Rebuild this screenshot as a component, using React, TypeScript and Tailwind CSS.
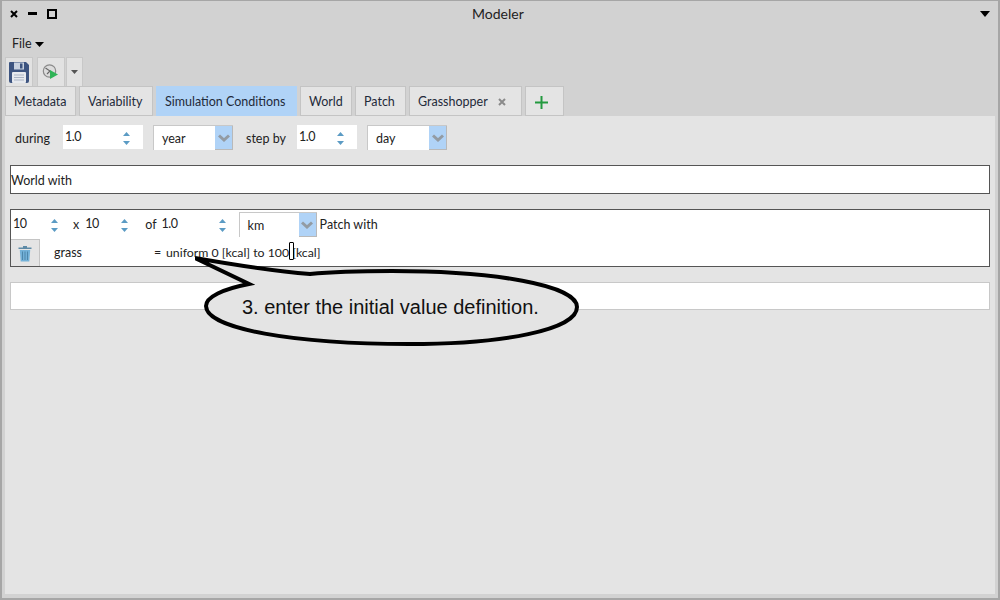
import React from 'react';

const Spinner = () => (
    <svg width="9" height="15" viewBox="0 0 9 15" className="shrink-0">
        <path d="M4.5 1 L8 5 H1 Z" fill="#5b9bc4" />
        <path d="M4.5 14 L8 10 H1 Z" fill="#5b9bc4" />
    </svg>
);

const NumberField = ({ value, w, pad = 'pr-[12px]' }: { value: string; w: string; pad?: string }) => (
    <div className={`${w} ${pad} bg-white h-[24px] flex items-center justify-between pl-[2px] pt-[2px]`}>
        <span className="relative top-[-1px] text-[12.5px] tracking-[-0.5px]">{value}</span>
        <Spinner />
    </div>
);

const Select = ({ value, w = 'w-[80px]' }: { value: string; w?: string }) => (
    <div className={`${w} h-[25px] flex bg-white border-t border-l border-[#c8c8c8]`}>
        <span className="flex-1 pl-[8px] leading-[26px]">{value}</span>
        <div className="w-[18px] bg-[#b0d3f7] border-r border-b border-[#b9b9b9] flex items-center justify-center">
            <svg width="12" height="8" viewBox="0 0 12 8">
                <path d="M1 1.5 L6 6 L11 1.5" fill="none" stroke="#939ba3" strokeWidth="3" />
            </svg>
        </div>
    </div>
);

const Tab = ({ label, w, active, children }: { label?: string; w: string; active?: boolean; children?: React.ReactNode }) => (
    <div className={`${w} h-[30px] flex items-center pl-[8px] pt-[2px] border-t border-x ${active ? 'bg-[#b0d3f7] border-[#b0d3f7]' : 'bg-[#e4e4e4] border-[#c4c4c4] border-b'}`}>
        {label}
        {children}
    </div>
);

export default function App() {
    return (
        <div className="w-[1000px] h-[600px] bg-[#d2d2d2] border-2 border-t-[1px] border-[#a6a6a6] flex flex-col text-[12.5px] text-[#222222] relative overflow-hidden" style={{ fontFamily: '"Lato", "Noto Sans", sans-serif' }}>
            {/* Title bar */}
            <div className="h-[27px] flex items-center justify-between pl-[8px] pr-[9px] pb-[2px] relative shrink-0">
                <div className="flex items-center gap-[10px]">
                    <svg width="8" height="8" viewBox="0 0 8 8"><path d="M1 1 L7 7 M7 1 L1 7" stroke="#000" strokeWidth="2" /></svg>
                    <div className="w-[9px] h-[3px] bg-black" />
                    <div className="w-[10px] h-[10px] border-2 border-black" />
                </div>
                <span className="absolute left-[470px] top-[2px] text-[14px]">Modeler</span>
                <svg width="10" height="6" viewBox="0 0 10 6" className="mr-[-1px]"><path d="M0 0 H10 L5 6 Z" fill="#000" /></svg>
            </div>

            {/* Menu */}
            <div className="h-[29px] flex items-center pl-[10px] gap-[3px] shrink-0 pt-[4px]">
                <span>File</span>
                <svg width="9" height="5" viewBox="0 0 9 5"><path d="M0 0 H9 L4.5 5 Z" fill="#000" /></svg>
            </div>

            {/* Toolbar */}
            <div className="h-[29px] flex pl-[3px] shrink-0">
                <div className="w-[28px] h-[29px] bg-[#e2e2e2] border-t border-x border-[#c8c8c8] flex items-center justify-center">
                    <svg width="22" height="23" viewBox="0 0 22 23">
                        <path d="M2 1 H18 L21 4 V20 Q21 22 19 22 H3 Q1 22 1 20 V2 Q1 1 2 1 Z" fill="#3d5480" />
                        <rect x="6" y="1.5" width="10" height="7" fill="#c9d2e0" />
                        <rect x="12" y="2.5" width="2.5" height="5" fill="#3d5480" />
                        <rect x="4" y="11" width="14" height="11" rx="1" fill="#e6e9ee" />
                        <path d="M6 14 H16 M6 16.5 H16 M6 19 H16" stroke="#a9b3c4" strokeWidth="1" />
                    </svg>
                </div>
                <div className="w-[28px] h-[29px] ml-[4px] bg-[#e2e2e2] border-t border-x border-[#c8c8c8] flex items-center justify-center">
                    <svg width="18" height="18" viewBox="0 0 18 18">
                        <circle cx="7.5" cy="8" r="6.2" fill="#dcdcdc" stroke="#8a8a8a" strokeWidth="1.2" />
                        <path d="M3.5 5 L8 8 L5 11" fill="none" stroke="#666" strokeWidth="1.1" />
                        <path d="M8 7 L16 11.5 L8 16 Z" fill="#2fb457" />
                    </svg>
                </div>
                <div className="w-[17px] h-[29px] ml-[1px] bg-[#e2e2e2] border-t border-x border-[#c8c8c8] flex items-center justify-center">
                    <svg width="7" height="4" viewBox="0 0 7 4"><path d="M0 0 H7 L3.5 4 Z" fill="#555" /></svg>
                </div>
            </div>

            {/* Tabs */}
            <div className="h-[30px] flex pl-[3px] gap-[3px] shrink-0 text-[#1f2a3a]">
                <Tab label="Metadata" w="w-[71px]" />
                <Tab label="Variability" w="w-[74px]" />
                <Tab label="Simulation Conditions" w="w-[141px]" active />
                <Tab label="World" w="w-[52px]" />
                <Tab label="Patch" w="w-[51px]" />
                <Tab label="Grasshopper" w="w-[113px]">
                    <svg width="8" height="8" viewBox="0 0 8 8" className="ml-[10px]"><path d="M1 1 L7 7 M7 1 L1 7" stroke="#8a8a8a" strokeWidth="2" /></svg>
                </Tab>
                <Tab w="w-[39px]">
                    <svg width="13" height="13" viewBox="0 0 13 13" className="ml-[1px]"><path d="M6.5 0 V13 M0 6.5 H13" stroke="#23993f" strokeWidth="2" /></svg>
                </Tab>
            </div>

            {/* Content panel */}
            <div className="mx-[3px] mb-[4px] flex-1 bg-[#e4e4e4] px-[5px] pt-[9px] flex flex-col">
                <div className="h-[25px] flex items-start">
                    <span className="ml-[5px] w-[48px] leading-[28px]">during</span>
                    <NumberField value="1.0" w="w-[80px]" />
                    <div className="ml-[10px]"><Select value="year" /></div>
                    <span className="ml-[13px] w-[51px] leading-[28px]">step by</span>
                    <NumberField value="1.0" w="w-[60px]" />
                    <div className="ml-[10px]"><Select value="day" /></div>
                </div>

                <div className="mt-[15px] h-[29px] bg-white border border-[#555555] flex items-center pt-[3px]">World with</div>

                <div className="mt-[15px] h-[58px] bg-white border border-[#555555] flex flex-col">
                    <div className="h-[29px] flex items-center">
                        <NumberField value="10" w="w-[48px]" pad="pr-[0px]" />
                        <span className="ml-[14px] pt-[2px]">x</span>
                        <div className="ml-[4px]"><NumberField value="10" w="w-[46px]" pad="pr-[0px]" /></div>
                        <span className="ml-[16px] pt-[2px]">of</span>
                        <div className="ml-[3px]"><NumberField value="1.0" w="w-[67px]" pad="pr-[0px]" /></div>
                        <div className="ml-[12px]"><Select value="km" w="w-[78px]" /></div>
                        <span className="ml-[3px] pt-[2px]">Patch with</span>
                    </div>
                    <div className="h-[27px] flex items-center">
                        <div className="w-[29px] h-[27px] bg-[#e4e4e4] border-t border-r border-[#c4c4c4] flex items-center justify-center">
                            <svg width="14" height="17" viewBox="0 0 14 17">
                                <path d="M0.5 2.5 H13.5 V4 H0.5 Z M5 1 H9 V2.5 H5 Z" fill="#5d8aa6" />
                                <path d="M1.8 5 H12.2 L11.3 16.5 H2.7 Z" fill="#73b1d8" />
                                <path d="M4.5 6.5 V15 M7 6.5 V15 M9.5 6.5 V15" stroke="#4e87ab" strokeWidth="1" />
                            </svg>
                        </div>
                        <span className="ml-[14px] w-[100px] pt-[2px]">grass</span>
                        <span className="w-[12px] pt-[2px]">=</span>
                        <span className="text-[12.3px] pt-[2px]">uniform 0 [kcal] to 100</span>
                        <span className="relative pt-[2px] text-[12.3px]">
                            <span className="absolute left-[0px] top-[0px] w-[5px] h-[18px] border border-black rounded-[1px]" />
                            <span className="ml-[3px]">[kcal]</span>
                        </span>
                    </div>
                </div>

                <div className="mt-[15px] h-[28px] bg-white border border-[#c8c8c8]" />
            </div>

            {/* Callout */}
            <svg width="400" height="110" viewBox="0 0 400 110" className="absolute left-[193px] top-[254px]">
                <path
                    d="M0 3 C40 10 75 16 115 19 C145 16 170 16 197 16 C298 16 382 30 382 52 C382 75 308 89 214 89 C100 89 11 74 11 51 C11 42 28 34 54 29 Z"
                    fill="#e4e4e4"
                    stroke="#000000"
                    strokeWidth="4"
                    strokeLinejoin="miter"
                />
            </svg>
            <span className="absolute left-[240px] top-[291px] text-[20px] text-[#111111]" style={{ fontFamily: '"Liberation Sans", sans-serif' }}>3. enter the initial value definition.</span>
        </div>
    );
}
